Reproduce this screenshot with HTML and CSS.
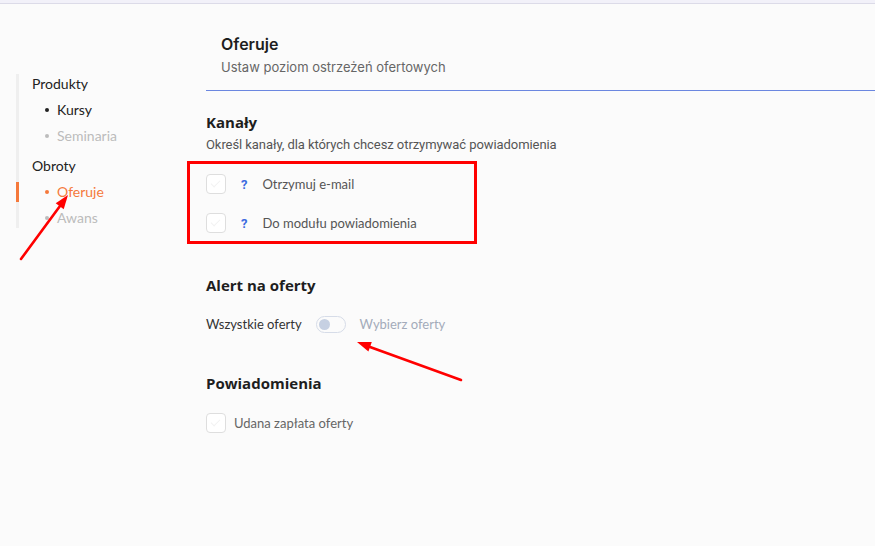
FILE: index.html
```html
<!DOCTYPE html>
<html lang="pl">
<head>
    <meta charset="UTF-8">
    <meta name="viewport" content="width=device-width, initial-scale=1.0">
    <title>Oferuje</title>
    <link rel="stylesheet" href="styles.css">
</head>
<body>
    <div class="topbar"></div>
    <div class="layout">
        <aside class="sidebar">
            <ul class="nav">
                <li class="nav-group">Produkty</li>
                <li class="nav-item">Kursy</li>
                <li class="nav-item muted">Seminaria</li>
                <li class="nav-group gap">Obroty</li>
                <li class="nav-item active">Oferuje</li>
                <li class="nav-item muted">Awans</li>
            </ul>
        </aside>
        <main class="content">
            <header class="page-head">
                <h1>Oferuje</h1>
                <p>Ustaw poziom ostrzeżeń ofertowych</p>
            </header>

            <section class="block">
                <h2>Kanały</h2>
                <p class="hint">Określ kanały, dla których chcesz otrzymywać powiadomienia</p>
                <div class="channels">
                    <label class="check-row">
                        <span class="checkbox"></span>
                        <span class="help">?</span>
                        <span>Otrzymuj e-mail</span>
                    </label>
                    <label class="check-row">
                        <span class="checkbox"></span>
                        <span class="help">?</span>
                        <span>Do modułu powiadomienia</span>
                    </label>
                </div>
            </section>

            <section class="block alert">
                <h2>Alert na oferty</h2>
                <div class="switch-row">
                    <span>Wszystkie oferty</span>
                    <span class="switch"><span class="knob"></span></span>
                    <span class="switch-off">Wybierz oferty</span>
                </div>
            </section>

            <section class="block notify">
                <h2>Powiadomienia</h2>
                <label class="check-row single">
                    <span class="checkbox"></span>
                    <span>Udana zapłata oferty</span>
                </label>
            </section>
        </main>
    </div>

    <!-- annotation arrows -->
    <svg class="marks" width="875" height="546" viewBox="0 0 875 546">
        <line x1="21" y1="259" x2="60" y2="206" stroke="#f00" stroke-width="2.6" stroke-linecap="round"/>
        <polygon points="68,195 63.7,209.3 55.7,203.3" fill="#f00"/>
        <line x1="461" y1="380" x2="370" y2="347" stroke="#f00" stroke-width="2.6" stroke-linecap="round"/>
        <polygon points="357,342 371.8,342.1 368.4,351.5" fill="#f00"/>
    </svg>
</body>
</html>
```

FILE: styles.css
```css
body {
    margin: 0;
    background: #fbfbfb;
    font-family: 'Lato', sans-serif;
    color: #222;
    position: relative;
    height: 546px;
    overflow: hidden;
}

.topbar {
    height: 3px;
    background: #f2f1f9;
    border-bottom: 1px solid #dcdbe8;
}

.layout {
    display: grid;
    grid-template-columns: 206px 1fr;
}

/* sidebar */
.sidebar {
    padding: 70px 0 0 16px;
}

.nav {
    list-style: none;
    margin: 0;
    padding: 0;
    border-left: 3px solid #efefef;
    display: flex;
    flex-direction: column;
    gap: 6px;
    font-size: 14px;
    line-height: 20px;
}

.nav li {
    margin-left: -3px;
    border-left: 3px solid transparent;
}

.nav-group {
    padding-left: 13px;
    color: #222;
}

.nav-group.gap {
    margin-top: 4px;
}

.nav-item {
    padding-left: 26px;
    color: #222;
    display: flex;
    align-items: center;
}

.nav-item::before {
    content: "";
    width: 4px;
    height: 4px;
    border-radius: 50%;
    background: currentColor;
    margin-right: 8px;
}

.nav-item.muted {
    color: #bcbcbc;
}

.nav .nav-item.active {
    color: #f5793b;
    border-left-color: #f5793b;
}

/* content */
.content {
    min-width: 0;
}

.page-head {
    padding: 30px 0 14px 15px;
    border-bottom: 1px solid #6b87e0;
}

.page-head h1 {
    margin: 0;
    font-family: 'Inter', sans-serif;
    font-weight: 600;
    font-size: 16px;
    line-height: 20px;
    color: #1e1e1e;
}

.page-head p {
    margin: 4px 0 0;
    font-family: 'Inter', sans-serif;
    font-size: 13px;
    line-height: 18px;
    color: #666;
}

.block h2 {
    margin: 0;
    font-family: 'Open Sans', sans-serif;
    font-weight: 700;
    font-size: 15px;
    line-height: 20px;
    color: #1e1e1e;
}

.block:first-of-type {
    margin-top: 21px;
}

.hint {
    margin: 4px 0 0;
    font-family: 'Roboto', sans-serif;
    font-size: 13px;
    letter-spacing: -0.07px;
    line-height: 18px;
    color: #555;
}

.channels {
    margin: 7px 0 0 -19px;
    width: 268px;
    padding: 10px 0 8px 16px;
    border: 3px solid #f00;
    display: flex;
    flex-direction: column;
    gap: 19px;
}

.check-row {
    display: flex;
    align-items: center;
    height: 20px;
    font-size: 13px;
    color: #555;
}

.checkbox {
    width: 18px;
    height: 18px;
    border: 1px solid #dedede;
    border-radius: 4px;
    background: #fff;
    position: relative;
    flex: none;
}

.checkbox::after {
    content: "";
    position: absolute;
    left: 6px;
    top: 3px;
    width: 4px;
    height: 8px;
    border: solid #f2f2f2;
    border-width: 0 1px 1px 0;
    transform: rotate(45deg);
}

.help {
    margin: 0 15px;
    color: #3d6ce0;
    font-family: 'Roboto', sans-serif;
    font-weight: 700;
    font-size: 13px;
}

.alert {
    margin-top: 31px;
}

.switch-row {
    margin-top: 20px;
    display: flex;
    align-items: center;
    gap: 14px;
    height: 18px;
    font-size: 13px;
    color: #333;
}

.switch {
    width: 26px;
    height: 15px;
    border: 1px solid #d6dce8;
    border-radius: 9px;
    display: flex;
    align-items: center;
    padding-left: 2px;
}

.knob {
    width: 11px;
    height: 11px;
    border-radius: 50%;
    background: #c6d0e2;
}

.switch-off {
    color: #a3abba;
}

.notify {
    margin-top: 40px;
}

.check-row.single {
    margin-top: 20px;
    gap: 8px;
    color: #666;
}

.marks {
    position: absolute;
    top: 0;
    left: 0;
    pointer-events: none;
}
```
